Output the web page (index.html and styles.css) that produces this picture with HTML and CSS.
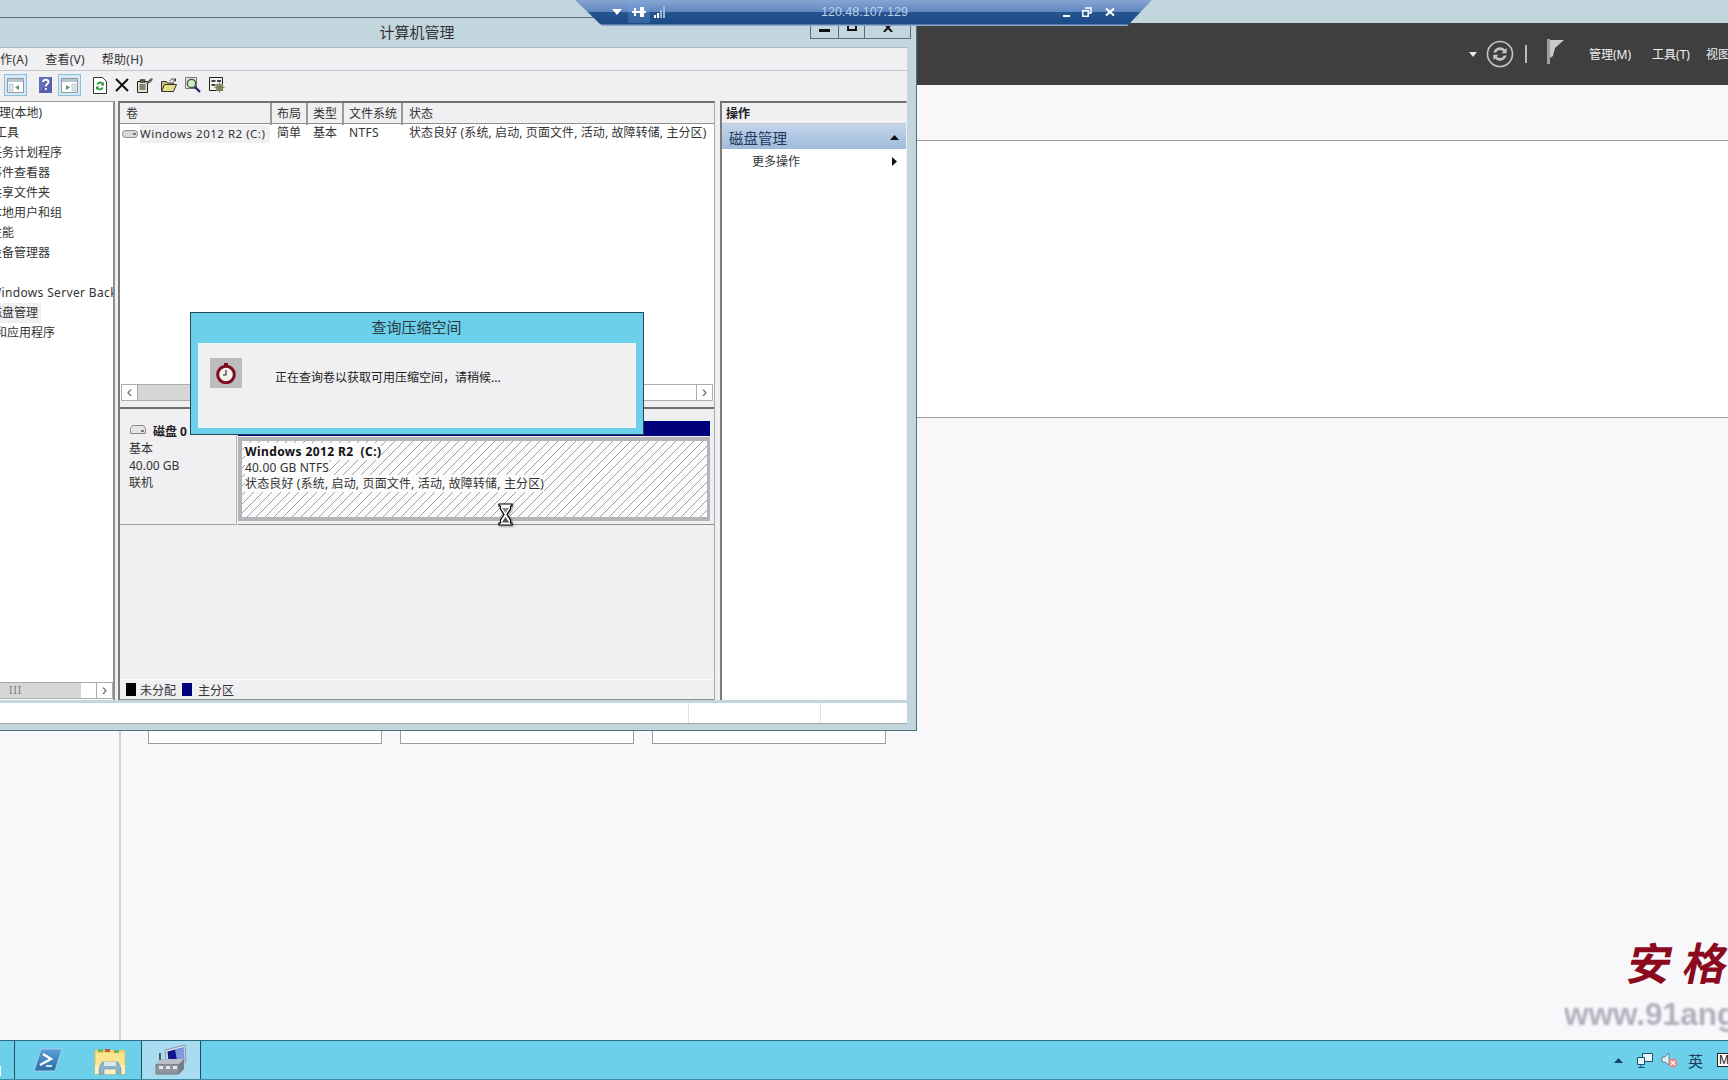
FILE: index.html
```html
<!DOCTYPE html>
<html lang="zh-CN">
  <head>
    <meta charset="UTF-8" />
    <title>计算机管理</title>
    <link rel="stylesheet" href="styles.css">
  </head>
  <body>
    <div class="desktop">

      <!-- Server manager behind the window -->
      <div class="sm">
        <div class="sm-strip"></div>
        <div class="sm-bar">
          <svg class="ic-caret" width="8" height="5" viewBox="0 0 8 5"><path d="M0 0h8L4 5z" fill="#e8e8e8"/></svg>
          <svg class="ic-refresh" width="28" height="28" viewBox="0 0 28 28">
            <circle cx="14" cy="14" r="12.5" fill="none" stroke="#c4c4c4" stroke-width="1.6"/>
            <path d="M7.5 12.5a6.8 6.8 0 0 1 11.6-3l1.6-1.4v5.2h-5.2l1.8-1.8a4.3 4.3 0 0 0-7.2 1zM20.5 15.5a6.8 6.8 0 0 1-11.6 3l-1.6 1.4v-5.2h5.2l-1.8 1.8a4.3 4.3 0 0 0 7.2-1z" fill="#c4c4c4"/>
          </svg>
          <span class="sm-sep"></span>
          <svg class="ic-flag" width="17" height="25" viewBox="0 0 17 25"><path d="M0 0h3v25H0z" fill="#9f9f9f"/><path d="M3 1h14L8 9l-2 8-3 2z" fill="#c9c9c9"/></svg>
          <span class="sm-menu first">管理(M)</span>
          <span class="sm-menu second">工具(T)</span>
          <span class="sm-menu">视图(V)</span>
        </div>
        <div class="sm-head"></div>
        <div class="sm-body">
          <div class="sm-side"></div>
          <div class="sm-main">
            <div class="sm-section"></div>
            <div class="sm-cards">
              <div class="sm-card"></div>
              <div class="sm-card"></div>
              <div class="sm-card"></div>
            </div>
          </div>
        </div>
        <div class="taskbar">
          <div class="start"><span class="start-bit"></span></div>
          <svg class="ic-ps" width="30" height="24" viewBox="0 0 30 24">
            <defs><linearGradient id="ps" x1="0" y1="0" x2="0" y2="1"><stop offset="0" stop-color="#5a9fd6"/><stop offset="1" stop-color="#2a6ca8"/></linearGradient></defs>
            <path d="M8 1h21l-7 22H1z" fill="url(#ps)" stroke="#a8cfe8"/>
            <path d="M10 6l8 5-11 6" fill="none" stroke="#fff" stroke-width="2.4"/>
            <path d="M13 18h6" stroke="#fff" stroke-width="1.6"/>
          </svg>
          <svg class="ic-explorer" width="32" height="28" viewBox="0 0 32 28">
            <path d="M1 4h30v23H1z" fill="#f9e68f" stroke="#d8b95a"/>
            <path d="M1 3h29v3H1z" fill="#f3d468"/>
            <path d="M4 2h5v3H4z" fill="#76b561"/><path d="M11 2h5v3h-5z" fill="#b5613f"/><path d="M20 3h5v3h-5z" fill="#76b561"/>
            <path d="M1 18h30v9H1z" fill="#fdf3c0"/>
            <path d="M5 27v-6l3-6h16l3 6v6h-5v-5H10v5z" fill="#8fb3c9" stroke="#6d93ab" stroke-width=".6"/>
            <path d="M10 15h12v4H10z" fill="#dbe8ef"/>
          </svg>
          <div class="task-active">
            <svg width="32" height="30" viewBox="0 0 32 30">
              <path d="M10 5l20-5 1 17-19 5z" fill="#d8dfe8" stroke="#8a96a5"/>
              <path d="M12.500 6.500l16-4 .8 13-15.500 4z" fill="#14148e"/>
              <path d="M20 4.500l9-2 .4 13-7 2z" fill="#7f9ae0"/>
              <path d="M1 19h23v10H1z" fill="#8f959c" stroke="#666c74" stroke-width=".8"/>
              <path d="M1 19l4-5h24l-5 5z" fill="#b8bec6"/>
              <path d="M24 19l5-5v10l-5 5z" fill="#777d85"/>
              <path d="M4 21h4v3H4zM11 21h4v3h-4zM18 21h4v3h-4z" fill="#e4e7ea"/>
              <path d="M4 8h2v7H4z" fill="#555b63"/>
            </svg>
          </div>
          <div class="tray">
            <svg width="9" height="5" viewBox="0 0 9 5"><path d="M4.500 0L9 5H0z" fill="#12456e"/></svg>
            <svg width="16" height="15" viewBox="0 0 16 15"><path d="M5.500.5h10v8h-10z" fill="#e8f5fb" stroke="#1d4f70"/><path d="M.5 4.500h7v7h-7z" fill="#e8f5fb" stroke="#1d4f70"/><path d="M4 11.500v3M1 14.500h7" stroke="#1d4f70"/></svg>
            <svg width="17" height="16" viewBox="0 0 17 16"><path d="M1 5h3l4-4v12L4 10H1z" fill="#e6eef2" stroke="#51707f" stroke-width=".8"/><circle cx="12" cy="11" r="4.500" fill="#e4888e"/><path d="M10 9l4 4M14 9l-4 4" stroke="#fff" stroke-width="1.400"/></svg>
            <span class="tray-lang">英</span>
            <span class="tray-box">M</span>
          </div>
        </div>
      </div>

      <!-- Computer management window -->
      <div class="win">
        <div class="win-title">计算机管理</div>
        <div class="win-btns">
          <span class="win-btn"><i class="g-min"></i></span>
          <span class="win-btn narrow"><i class="g-max"></i></span>
          <span class="win-btn wide">
            <svg width="10" height="9" viewBox="0 0 10 9"><path d="M1 0l8 9M9 0L1 9" stroke="#111" stroke-width="2"/></svg>
          </span>
        </div>
        <div class="menu">
          <span>操作(A)</span>
          <span>查看(V)</span>
          <span>帮助(H)</span>
        </div>
        <div class="toolbar">
          <span class="tb-toggle tb-first">
            <svg width="17" height="15" viewBox="0 0 17 15"><path d="M.5.500h16v14H.5z" fill="#fff" stroke="#8d99a3"/><path d="M1 1h15v3H1z" fill="#b9c6d0"/><path d="M2 6h4v7H2z" fill="#dfe6ea" stroke="#9aa6ae" stroke-width=".5"/><path d="M12 7v5L8 9.500z" fill="#5a9a78"/></svg>
          </span>
          <svg class="tb-help" width="13" height="16" viewBox="0 0 13 16"><path d="M0 0h13v16H0z" fill="#5660ad"/><path d="M0 0h13L0 16z" fill="#6a76c4" opacity=".6"/><path d="M4 5c0-3 5.500-3 5.500 0 0 2-2.700 2-2.700 4.500M6.800 11v2" fill="none" stroke="#fff" stroke-width="1.800"/></svg>
          <span class="tb-toggle tb-second">
            <svg width="17" height="15" viewBox="0 0 17 15"><path d="M.5.500h16v14H.5z" fill="#fff" stroke="#8d99a3"/><path d="M1 1h15v3H1z" fill="#b9c6d0"/><path d="M11 6h4v7h-4z" fill="#dfe6ea" stroke="#9aa6ae" stroke-width=".5"/><path d="M5 7v5l4-2.500z" fill="#5a9a78"/></svg>
          </span>
          <svg class="tb-icon tb-gap" width="14" height="17" viewBox="0 0 14 17"><path d="M.5.500h9l4 4v12H.5z" fill="#fff" stroke="#333"/><path d="M3.500 7a3.800 3.800 0 0 1 6.500-1l1-1v3.500H7.500L9 7.200A2.400 2.400 0 0 0 5 8z" fill="#2f9a3a"/><path d="M10.500 11a3.800 3.800 0 0 1-6.500 1l-1 1V9.500h3.500L5 10.800A2.400 2.400 0 0 0 9 10z" fill="#2f9a3a"/></svg>
          <svg class="tb-icon" width="14" height="14" viewBox="0 0 14 14"><path d="M1 1l12 12M13 1L1 13" stroke="#111" stroke-width="2"/></svg>
          <svg class="tb-icon" width="16" height="16" viewBox="0 0 16 16"><path d="M.5 4.500h10v11H.5z" fill="#e8e4d0" stroke="#222"/><path d="M3 2.500h5v3H3z" fill="#555" stroke="#222" stroke-width=".5"/><path d="M2.500 8h6M2.500 10h6M2.500 12h6" stroke="#222"/><path d="M9 6l5-5 2 1-1 2-5 4z" fill="#666"/></svg>
          <svg class="tb-icon" width="16" height="14" viewBox="0 0 16 14"><path d="M.5 3.500h5l1 1.500h6v8h-12z" fill="#d6c36a" stroke="#333"/><path d="M.5 13.500l3-7h12l-3 7z" fill="#e9dc8a" stroke="#333"/><path d="M9 3c1-2.500 3-2.500 5-1.500M14.500.5v2.500H12" fill="none" stroke="#333"/></svg>
          <svg class="tb-icon" width="16" height="16" viewBox="0 0 16 16"><path d="M.5.500h11v11H.5z" fill="#e4e8dc" stroke="#777"/><circle cx="6.500" cy="6.500" r="4.200" fill="#cfe8c8" stroke="#3c5a3c" stroke-width="1.300"/><path d="M9.800 9.800L15 15" stroke="#1a2270" stroke-width="2.200"/></svg>
          <svg class="tb-icon" width="16" height="16" viewBox="0 0 16 16"><path d="M.5.500h13v13H.5z" fill="#f2f0ea" stroke="#222"/><path d="M2.500 3h4v2h-4zM2.500 7h4v2h-4zM8 3h4v2H8z" fill="#444"/><circle cx="10.500" cy="10.500" r="3.800" fill="#8f8f68"/><circle cx="10.500" cy="10.500" r="1.500" fill="#f2f0ea"/><path d="M10.500 5.500v10M5.500 10.500h10M7 7l7 7M14 7l-7 7" stroke="#7a7a55"/></svg>
        </div>

        <div class="panes">
          <div class="tree">
            <div class="tree-list">
              <div class="lv0">计算机管理(本地)</div>
              <div class="lv1">系统工具</div>
              <div class="lv2">任务计划程序</div>
              <div class="lv2">事件查看器</div>
              <div class="lv2">共享文件夹</div>
              <div class="lv2">本地用户和组</div>
              <div class="lv2">性能</div>
              <div class="lv2">设备管理器</div>
              <div class="lv1">存储</div>
              <div class="lv2 latin">Windows Server Backup</div>
              <div class="lv2"><span class="tree-sel">磁盘管理</span></div>
              <div class="lv1">服务和应用程序</div>
            </div>
            <div class="tree-scroll">
              <span class="tree-thumb">III</span>
              <span class="tree-track"></span>
              <span class="sb-btn">›</span>
            </div>
          </div>

          <div class="center">
            <div class="vol-list">
              <div class="vol-head">
                <span>卷</span><span>布局</span><span>类型</span><span>文件系统</span><span>状态</span>
              </div>
              <div class="vol-row">
                <span class="vol-name">
                  <svg width="16" height="8" viewBox="0 0 16 8"><rect x=".5" y=".5" width="15" height="7" rx="3" fill="#d8d8d8" stroke="#8a8a8a"/><path d="M11 3h3v2h-3z" fill="#777"/></svg>
                  <b>Windows 2012 R2 (C:)</b>
                </span>
                <span>简单</span><span>基本</span><span class="latin">NTFS</span>
                <span class="vol-status">状态良好 (系统, 启动, 页面文件, 活动, 故障转储, 主分区)</span>
              </div>
              <div class="vol-fill"></div>
              <div class="vol-scroll">
                <span class="sb-btn">‹</span>
                <span class="vol-thumb"></span>
                <span class="vol-track"></span>
                <span class="sb-btn">›</span>
              </div>
              <div class="vol-strip"></div>
            </div>
            <div class="disk-area">
              <div class="disk-row">
                <div class="disk-info">
                  <div class="disk-name">
                    <svg width="16" height="9" viewBox="0 0 16 9"><path d="M.5 3.500l2-3h11l2 3v5H.5z" fill="#e4e4e4" stroke="#8a8a8a"/><path d="M11 5h3v2h-3z" fill="#777"/></svg>
                    <b>磁盘 0</b>
                  </div>
                  <div>基本</div>
                  <div>40.00 GB</div>
                  <div>联机</div>
                </div>
                <div class="disk-part">
                  <div class="part-head"></div>
                  <div class="part-frame">
                    <div class="part-hatch">
                      <div><b>Windows 2012 R2&nbsp; (C:)</b></div>
                      <div><span>40.00 GB NTFS</span></div>
                      <div><span>状态良好 (系统, 启动, 页面文件, 活动, 故障转储, 主分区)</span></div>
                    </div>
                  </div>
                </div>
              </div>
              <div class="legend">
                <i class="swatch black"></i><span>未分配</span>
                <i class="swatch navy"></i><span>主分区</span>
              </div>
            </div>
          </div>

          <div class="actions">
            <div class="act-head">操作</div>
            <div class="act-group">
              <span>磁盘管理</span>
              <svg width="9" height="5" viewBox="0 0 9 5"><path d="M4.500 0L9 5H0z" fill="#111"/></svg>
            </div>
            <div class="act-item">
              <span>更多操作</span>
              <svg width="5" height="9" viewBox="0 0 5 9"><path d="M0 0l5 4.500L0 9z" fill="#111"/></svg>
            </div>
          </div>
        </div>

        <div class="status">
          <span class="status-a"></span>
          <span class="status-b"></span>
          <span class="status-c"></span>
        </div>
      </div>

      <!-- Shrink query dialog -->
      <div class="dialog">
        <div class="dialog-title">查询压缩空间</div>
        <div class="dialog-body">
          <div class="dialog-icon">
            <svg width="20" height="21" viewBox="0 0 20 21"><path d="M8 0h4v3H8z" fill="#6e1020"/><circle cx="10" cy="11.500" r="8.300" fill="#f5f2ee" stroke="#7d0c20" stroke-width="3"/><path d="M10 7v5H7" fill="none" stroke="#222" stroke-width="1.100"/></svg>
          </div>
          <p>正在查询卷以获取可用压缩空间，请稍候...</p>
        </div>
      </div>

      <!-- Busy cursor -->
      <svg class="cursor" width="15" height="23" viewBox="0 0 15 23">
        <path d="M1 1h13v2h-1.500v3L9 11.500l3.500 5.500v3H14v2H1v-2h1.500v-3L6 11.500 2.500 6V3H1z" fill="#fff" stroke="#000" stroke-width="1.200"/>
        <path d="M4 5h7L7.500 10z" fill="#888"/><path d="M3.800 19.500L7.500 14l3.700 5.500z" fill="#555"/>
      </svg>

      <!-- Watermark -->
      <div class="mark">
        <div class="mark-cn"><span>安</span><span>格</span></div>
        <div class="mark-url">www.91ang</div>
      </div>

      <!-- Remote session bar -->
      <div class="rdp">
        <svg class="rdp-caret" width="10" height="6" viewBox="0 0 10 6"><path d="M0 0h10L5 6z" fill="#fff"/></svg>
        <span class="rdp-pin">
          <svg width="14" height="10" viewBox="0 0 14 10"><path d="M0 4h14v2H0zM2 1h2v8H2zM8 0h4v10H8z" fill="#fff"/></svg>
        </span>
        <svg class="rdp-signal" width="12" height="12" viewBox="0 0 12 12"><path d="M0 9h2v3H0zM3 7h2v5H3z" fill="#fff"/><path d="M6 4h2v8H6zM9 0h2v12H9z" fill="#9db8d8"/></svg>
        <span class="rdp-ip">120.48.107.129</span>
        <span class="rdp-min"></span>
        <svg class="rdp-restore" width="10" height="10" viewBox="0 0 10 10"><path d="M3 1h6v5H7M.8 3.800h5.400v5.400H.8z" fill="none" stroke="#fff" stroke-width="1.500"/></svg>
        <svg class="rdp-close" width="10" height="8" viewBox="0 0 10 8"><path d="M1 .5l8 7M9 .5l-8 7" stroke="#fff" stroke-width="2"/></svg>
      </div>
    </div>
  </body>
</html>
```

FILE: styles.css
```css
* {
  box-sizing: border-box;
}
html, body {
  margin: 0;
  padding: 0;
}
body {
  font-family: "Noto Sans", "Noto Sans CJK SC", sans-serif;
  font-size: 12px;
  color: #222;
}
.desktop {
  position: relative;
  width: 1728px;
  height: 1080px;
  overflow: hidden;
  background: #f8f7fa;
}
svg {
  display: block;
  flex: none;
}

/* Server manager */
.sm {
  height: 100%;
  display: flex;
  flex-direction: column;
}
.sm-strip {
  height: 23px;
  background: #c3d6de;
}
.sm-bar {
  height: 62px;
  background: #3f3f3f;
  display: flex;
  align-items: center;
  color: #f0f0f0;
  font-size: 12px;
  padding-left: 1469px;
  white-space: nowrap;
  overflow: hidden;
}
.ic-refresh {
  margin-left: 9px;
}
.sm-sep {
  width: 2px;
  height: 18px;
  background: #bbb;
  margin-left: 11px;
  flex: none;
}
.ic-flag {
  margin-left: 20px;
  margin-top: -5px;
}
.sm-menu {
  margin-left: 16px;
  flex: none;
}
.sm-menu.first {
  margin-left: 25px;
}
.sm-menu.second {
  margin-left: 21px;
}
.sm-head {
  height: 56px;
  border-bottom: 1px solid #9d9da3;
}
.sm-body {
  flex: 1;
  display: flex;
  min-height: 0;
}
.sm-side {
  width: 121px;
  border-right: 2px solid #d2d2d6;
}
.sm-main {
  flex: 1;
}
.sm-section {
  height: 277px;
  background: #fff;
  border-bottom: 1px solid #9d9da3;
}
.sm-cards {
  display: flex;
  gap: 18px;
  padding-left: 27px;
  margin-top: 206px;
}
.sm-card {
  width: 234px;
  height: 120px;
  background: #fff;
  border: 1px solid #9d9da3;
}

/* Taskbar */
.taskbar {
  height: 40px;
  background: #6cd0ea;
  border-top: 1px solid #2a6a80;
  border-bottom: 1px solid #3c8aa3;
  display: flex;
  align-items: center;
}
.start {
  width: 15px;
  height: 100%;
  border-right: 1px solid #1d4f64;
  display: flex;
  align-items: flex-end;
  padding-bottom: 3px;
  flex: none;
}
.start-bit {
  width: 1px;
  height: 10px;
  background: #fff;
}
.ic-ps {
  margin-left: 18px;
}
.ic-explorer {
  margin-left: 31px;
  margin-top: 2px;
}
.task-active {
  width: 60px;
  height: 100%;
  margin-left: 15px;
  background: #a9dcf1;
  border-left: 1px solid #1d4f64;
  border-right: 1px solid #1d4f64;
  display: flex;
  align-items: center;
  justify-content: center;
  flex: none;
}
.tray {
  display: flex;
  align-items: center;
  margin-left: 1413px;
  white-space: nowrap;
  flex: none;
}
.tray svg:nth-child(2) {
  margin-left: 14px;
}
.tray svg:nth-child(3) {
  margin-left: 8px;
}
.tray-lang {
  margin-left: 10px;
  font-size: 15px;
  color: #1c3f55;
}
.tray-box {
  margin-left: 14px;
  width: 16px;
  height: 14px;
  background: #fff;
  border: 1px solid #222;
  font-size: 12px;
  line-height: 12px;
  padding-left: 1px;
  color: #111;
  font-family: "Liberation Sans", sans-serif;
}

/* Window */
.win {
  position: absolute;
  left: -83px;
  top: 17px;
  width: 1000px;
  height: 714px;
  background: #c3d6de;
  border: 1px solid #53707f;
  padding-right: 9px;
  display: flex;
  flex-direction: column;
}
.win-title {
  height: 29px;
  margin-right: -9px;
  text-align: center;
  font-size: 15px;
  line-height: 28px;
  color: #333;
  flex: none;
}
.win-btns {
  position: absolute;
  right: 5px;
  top: -1px;
  height: 22px;
  display: flex;
  border: 1px solid #53707f;
  border-top: 0;
}
.win-btn {
  width: 28px;
  border-right: 1px solid #53707f;
  position: relative;
}
.win-btn.narrow {
  width: 26px;
}
.win-btn.wide {
  width: 45px;
  border-right: 0;
  display: flex;
  justify-content: center;
  align-items: flex-end;
  padding-bottom: 6px;
}
.g-min {
  position: absolute;
  left: 8px;
  bottom: 6px;
  width: 11px;
  height: 3px;
  background: #111;
}
.g-max {
  position: absolute;
  left: 8px;
  bottom: 7px;
  width: 10px;
  height: 8px;
  border: 2px solid #111;
}
.menu {
  height: 24px;
  background: #f0eff1;
  border-top: 1px solid #a9b8c2;
  border-bottom: 1px solid #c3c6ca;
  display: flex;
  align-items: center;
  gap: 17px;
  padding-left: 70px;
  letter-spacing: .25px;
  flex: none;
  color: #333;
}
.toolbar {
  height: 30px;
  background: #f0eff1;
  display: flex;
  align-items: center;
  padding: 0 0 2px 86px;
  flex: none;
}
.tb-toggle {
  width: 23px;
  height: 22px;
  background: #d6e9f5;
  border: 1px solid #8cc0dd;
  display: flex;
  align-items: center;
  justify-content: center;
  flex: none;
}
.tb-help {
  margin-left: 12px;
}
.tb-second {
  margin-left: 6px;
}
.tb-icon {
  margin-left: 8px;
}
.tb-gap {
  margin-left: 12px;
}
.panes {
  height: 599px;
  display: flex;
  background: #f0eff1;
  flex: none;
}

/* Tree */
.tree {
  width: 197px;
  background: #fff;
  border-top: 1px solid #9b9b9b;
  border-right: 2px solid #8e8e8e;
  display: flex;
  flex-direction: column;
  overflow: hidden;
  white-space: nowrap;
  flex: none;
}
.tree-list {
  flex: 1;
  padding-top: 1px;
  color: #333;
}
.tree-list div {
  height: 20px;
  line-height: 20px;
}
.lv0 {
  padding-left: 33px;
}
.lv1 {
  padding-left: 53px;
}
.lv2 {
  padding-left: 72px;
}
.latin {
  letter-spacing: .35px;
}
.tree-sel {
  display: inline-block;
  background: #f0eff1;
  padding-right: 3px;
  height: 20px;
}
.tree-scroll {
  height: 17px;
  margin-bottom: 1px;
  display: flex;
  border: 1px solid #ababab;
  border-width: 1px 0;
  flex: none;
}
.tree-thumb {
  width: 163px;
  background: #d6d6d6;
  color: #777;
  font-size: 10px;
  line-height: 15px;
  padding-left: 91px;
  letter-spacing: 1px;
  flex: none;
}
.tree-track {
  flex: 1;
}
.sb-btn {
  width: 17px;
  text-align: center;
  line-height: 13px;
  font-size: 16px;
  color: #666;
  background: #fff;
  border-left: 1px solid #ababab;
  border-right: 1px solid #ababab;
  font-family: "Liberation Sans", sans-serif;
  flex: none;
}

/* Volume list and disk map */
.center {
  width: 597px;
  margin-left: 3px;
  border-top: 2px solid #6f6f6f;
  border-left: 2px solid #7b7b7b;
  border-right: 1px solid #a8a8a8;
  display: flex;
  flex-direction: column;
  flex: none;
}
.vol-list {
  height: 306px;
  background: #fff;
  display: flex;
  flex-direction: column;
  border-bottom: 2px solid #6f6f6f;
  flex: none;
}
.vol-head,
.vol-row {
  display: grid;
  grid-template-columns: 152px 36px 36px 59px 1fr;
  flex: none;
}
.vol-head {
  height: 21px;
  background: #f0eff1;
  border-bottom: 1px solid #8f8f8f;
  line-height: 22px;
  color: #333;
}
.vol-head span {
  padding-left: 5px;
  border-right: 2px solid #9a9a9a;
}
.vol-head span:first-child,
.vol-head span:last-child {
  padding-left: 6px;
}
.vol-head span:last-child {
  border-right: 0;
}
.vol-row {
  height: 19px;
  line-height: 18px;
  color: #333;
}
.vol-row span {
  padding-left: 5px;
}
.vol-row .vol-name {
  display: flex;
  align-items: center;
  padding-left: 2px;
  gap: 2px;
  white-space: nowrap;
}
.vol-name b {
  font-weight: 400;
  background: #f0eff1;
  letter-spacing: .5px;
  flex: 1;
  margin-right: 2px;
  font-size: 11.500px;
}
.vol-row .vol-status {
  white-space: nowrap;
  padding-left: 6px;
  letter-spacing: .1px;
}
.vol-fill {
  flex: 1;
}
.vol-scroll {
  height: 17px;
  margin: 0 1px;
  display: flex;
  border: 1px solid #ababab;
  border-width: 1px 0;
  flex: none;
}
.vol-thumb {
  width: 400px;
  background: #d6d6d6;
}
.vol-track {
  flex: 1;
}
.vol-strip {
  height: 6px;
  background: #f0eff1;
  flex: none;
}
.disk-area {
  flex: 1;
  display: flex;
  flex-direction: column;
  justify-content: space-between;
  background: #f0eff1;
  min-height: 0;
}
.disk-row {
  display: flex;
  height: 116px;
}
.disk-info {
  width: 117px;
  height: 116px;
  border-right: 1px solid #b5b5b5;
  border-bottom: 1px solid #a0a0a0;
  padding: 14px 0 0 9px;
  line-height: 17px;
  color: #333;
}
.disk-name {
  display: flex;
  align-items: center;
  gap: 7px;
  margin: 0 0 1px 1px;
  height: 16px;
}
.disk-name svg {
  margin-top: -3px;
}
.disk-name b {
  color: #222;
}
.disk-part {
  width: 476px;
  margin-left: 1px;
  padding-top: 12px;
  border-bottom: 1px solid #8f8f8f;
  height: 116px;
}
.part-head {
  width: 472px;
  height: 15px;
  background: #00007a;
}
.part-frame {
  width: 472px;
  height: 84px;
  padding: 4px 3px 4px 4px;
  background: #b3b3ba;
  margin-top: 1px;
}
.part-hatch {
  height: 100%;
  padding: 3px 0 0 3px;
  line-height: 16px;
  color: #333;
  background: repeating-linear-gradient(135deg, #fbfbfb 0, #fbfbfb 5.700px, #a0a0a0 5.700px, #a0a0a0 6.400px);
}
.part-hatch b {
  color: #111;
  background: #fbfbfb;
  letter-spacing: .4px;
}
.part-hatch span {
  background: #fbfbfb;
  letter-spacing: .15px;
}
.legend {
  height: 21px;
  border-top: 1px solid #fff;
  border-bottom: 1px solid #8a8a8a;
  display: flex;
  align-items: center;
  padding-left: 6px;
  color: #333;
}
.swatch {
  width: 10px;
  height: 13px;
  margin-right: 4px;
}
.swatch.black {
  background: #000;
}
.swatch.navy {
  background: #00007a;
  margin-left: 6px;
  margin-right: 6px;
}

/* Action pane */
.actions {
  width: 187px;
  margin-left: 5px;
  background: #fff;
  border-top: 2px solid #6f6f6f;
  border-left: 2px solid #7b7b7b;
  border-right: 1px solid #e8eef1;
  flex: none;
}
.act-head {
  height: 21px;
  background: #f0eff1;
  border-bottom: 1px solid #c9c9c9;
  padding-left: 4px;
  line-height: 22px;
  font-weight: 700;
  color: #222;
}
.act-group {
  height: 25px;
  background: linear-gradient(#c3d6ea, #9fbadb);
  display: flex;
  align-items: center;
  justify-content: space-between;
  padding: 2px 7px 0 7px;
  font-size: 14.500px;
  color: #22385a;
}
.act-item {
  height: 24px;
  display: flex;
  align-items: center;
  justify-content: space-between;
  padding: 0 9px 0 30px;
  color: #333;
}

/* Status bar */
.status {
  height: 21px;
  margin-top: 3px;
  background: #fff;
  border-bottom: 1px solid #a3a3a3;
  display: flex;
  flex: none;
}
.status-a {
  width: 770px;
}
.status-b {
  width: 133px;
  border-left: 1px solid #e0e0e0;
  border-right: 1px solid #e0e0e0;
}
.status-c {
  flex: 1;
}

/* Dialog */
.dialog {
  position: absolute;
  left: 190px;
  top: 312px;
  width: 454px;
  height: 123px;
  background: #6cd0ea;
  border: 1px solid #23485a;
  padding: 0 7px 6px;
  display: flex;
  flex-direction: column;
}
.dialog-title {
  height: 30px;
  padding-right: 1px;
  text-align: center;
  font-size: 15px;
  line-height: 29px;
  color: #2a3a44;
  flex: none;
}
.dialog-body {
  flex: 1;
  background: #f0eff1;
  border: 1px solid #e8f6fb;
  display: flex;
  padding: 14px 0 0 11px;
}
.dialog-icon {
  width: 32px;
  height: 30px;
  background: #bcbcbc;
  display: flex;
  align-items: center;
  justify-content: center;
  flex: none;
}
.dialog-body p {
  margin: 11px 0 0 33px;
  color: #222;
  line-height: 18px;
}

/* Cursor */
.cursor {
  position: absolute;
  left: 498px;
  top: 503px;
  filter: drop-shadow(1px 1px 1px rgba(0, 0, 0, .4));
}

/* Watermark */
.mark {
  position: absolute;
  right: 0;
  top: 935px;
  width: 164px;
  overflow: hidden;
}
.mark-cn {
  display: flex;
  gap: 12px;
  padding-left: 64px;
  height: 59px;
  font-size: 44px;
  line-height: 56px;
  font-weight: 700;
  color: #8b0a1e;
  white-space: nowrap;
}
.mark-cn span {
  transform: skewX(-12deg);
  flex: none;
}
.mark-url {
  font-family: "Liberation Sans", sans-serif;
  font-size: 31.500px;
  line-height: 40px;
  font-weight: 700;
  color: #b0b0bd;
  filter: blur(1.200px);
  white-space: nowrap;
}

/* Remote session bar */
.rdp {
  position: absolute;
  left: 575px;
  top: 0;
  width: 577px;
  height: 26px;
  clip-path: polygon(0 0, 100% 0, 95.700% 100%, 4.700% 100%);
  background: linear-gradient(#86a5d2 0, #5f87c0 12px, #25558f 12px, #1d4a88 24px, #90aacb 25px);
  display: flex;
  align-items: center;
  padding-bottom: 2px;
}
.rdp-caret {
  margin-left: 37px;
}
.rdp-pin {
  width: 22px;
  height: 22px;
  margin-left: 6px;
  background: rgba(120, 170, 225, .28);
  display: flex;
  align-items: center;
  justify-content: center;
}
.rdp-signal {
  margin-left: 4px;
}
.rdp-ip {
  margin-left: 155px;
  font-family: "Liberation Sans", sans-serif;
  font-size: 12.500px;
  color: #bcd0e6;
}
.rdp-min {
  width: 7px;
  height: 2px;
  background: #fff;
  margin-left: 155px;
  margin-top: 8px;
}
.rdp-restore {
  margin-left: 12px;
}
.rdp-close {
  margin-left: 13px;
}
```
